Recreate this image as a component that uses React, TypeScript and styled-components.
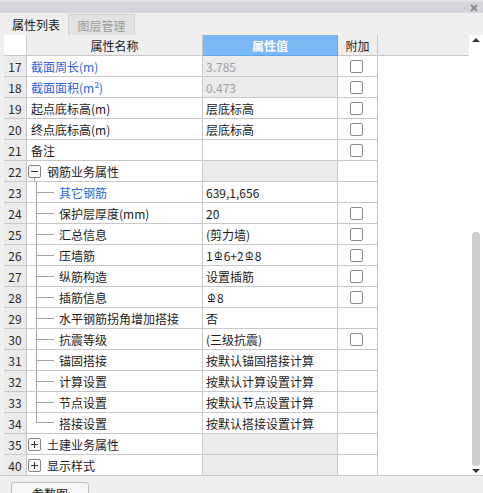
import React from "react";
import styled, { createGlobalStyle, css } from "styled-components";

type Group = "open" | "closed";

interface PropRow {
  no: number;
  name: string;
  value?: string;
  blue?: boolean;
  locked?: boolean;
  check?: boolean;
  group?: Group;
  child?: boolean;
  last?: boolean;
}

// '#' in a value stands for the rebar grade mark
const rows: PropRow[] = [
  { no: 17, name: "截面周长(m)", value: "3.785", blue: true, locked: true, check: true },
  { no: 18, name: "截面面积(m²)", value: "0.473", blue: true, locked: true, check: true },
  { no: 19, name: "起点底标高(m)", value: "层底标高", check: true },
  { no: 20, name: "终点底标高(m)", value: "层底标高", check: true },
  { no: 21, name: "备注", value: "", check: true },
  { no: 22, name: "钢筋业务属性", group: "open", locked: true },
  { no: 23, name: "其它钢筋", value: "639,1,656", child: true, blue: true },
  { no: 24, name: "保护层厚度(mm)", value: "20", child: true, check: true },
  { no: 25, name: "汇总信息", value: "(剪力墙)", child: true, check: true },
  { no: 26, name: "压墙筋", value: "1#6+2#8", child: true, check: true },
  { no: 27, name: "纵筋构造", value: "设置插筋", child: true, check: true },
  { no: 28, name: "插筋信息", value: "#8", child: true, check: true },
  { no: 29, name: "水平钢筋拐角增加搭接", value: "否", child: true },
  { no: 30, name: "抗震等级", value: "(三级抗震)", child: true, check: true },
  { no: 31, name: "锚固搭接", value: "按默认锚固搭接计算", child: true },
  { no: 32, name: "计算设置", value: "按默认计算设置计算", child: true },
  { no: 33, name: "节点设置", value: "按默认节点设置计算", child: true },
  { no: 34, name: "搭接设置", value: "按默认搭接设置计算", child: true, last: true },
  { no: 35, name: "土建业务属性", group: "closed", locked: true },
  { no: 40, name: "显示样式", group: "closed", locked: true },
];

const GRID = "#c8c8c8";

const GlobalStyle = createGlobalStyle`
  html, body {
    margin: 0;
    padding: 0;
    height: 493px;
    overflow: hidden;
    background: #efefef;
  }
  body {
    font-family: "Noto Sans CJK SC", "Noto Sans", sans-serif;
    font-size: 12px;
    color: #1c1c1c;
  }
`;

const Panel = styled.div`
  width: 483px;
  height: 493px;
  display: flex;
  flex-direction: column;
  background: #efefef;
  overflow: hidden;
`;

const TitleBar = styled.div`
  height: 13px;
  box-sizing: border-box;
  border-top: 2px solid #e3e2e7;
  background: #d6d5db;
  display: flex;
  justify-content: flex-end;
  align-items: center;
  padding-right: 5px;
`;

const TabBar = styled.div`
  height: 22px;
  display: flex;
  align-items: stretch;
  padding: 1px 0 0 4px;
  box-sizing: border-box;
`;

const Tab = styled.div<{ $active?: boolean }>`
  display: flex;
  align-items: center;
  justify-content: center;
  box-sizing: border-box;
  ${(p) =>
    p.$active
      ? css`
          width: 64px;
          color: #1a1a1a;
        `
      : css`
          width: 67px;
          color: #9b9b9b;
          background: #e3e3e3;
          border: 1px solid #d3d3d3;
          border-bottom: none;
        `}
`;

const Body = styled.div`
  height: 440px;
  display: flex;
`;

const Gutter = styled.div`
  width: 4px;
  flex: none;
`;

const Table = styled.div`
  width: 465px;
  flex: none;
  display: flex;
  flex-direction: column;
  background: #ffffff;
`;

const Row = styled.div<{ $last?: boolean }>`
  display: grid;
  grid-template-columns: 23px 176px 135px 40px 1fr;
  height: ${(p) => (p.$last ? 20 : 21)}px;
`;

const Cell = styled.div<{ $bottom?: boolean }>`
  box-sizing: border-box;
  border-right: 1px solid ${GRID};
  border-bottom: ${(p) => (p.$bottom === false ? "none" : `1px solid ${GRID}`)};
  display: flex;
  align-items: center;
  overflow: hidden;
  white-space: nowrap;
`;

const HeadCell = styled(Cell)<{ $blue?: boolean }>`
  justify-content: center;
  background: ${(p) => (p.$blue ? "#7bb8f6" : "#efefef")};
  color: ${(p) => (p.$blue ? "#ffffff" : "#1c1c1c")};
  font-weight: ${(p) => (p.$blue ? 700 : 400)};
  border-color: ${(p) => (p.$blue ? "#62a4ec" : GRID)};
`;

const CornerCell = styled.div`
  background: #ffffff;
  border-bottom: 1px solid ${GRID};
  border-right: 1px solid ${GRID};
  box-sizing: border-box;
`;

const HeadFiller = styled.div`
  background: #efefef;
  border-bottom: 1px solid ${GRID};
  box-sizing: border-box;
`;

const NumCell = styled(Cell)`
  background: #ebebeb;
  justify-content: center;
  color: #2a2a2a;
`;

const NameCell = styled(Cell)<{ $blue?: boolean; $tree?: boolean }>`
  padding-left: ${(p) => (p.$tree ? 1 : 4)}px;
  color: ${(p) => (p.$blue ? "#2a66d8" : "#1c1c1c")};
`;

const ValueCell = styled(Cell)<{ $locked?: boolean }>`
  padding-left: 3px;
  background: ${(p) => (p.$locked ? "#ebebeb" : "#ffffff")};
  color: ${(p) => (p.$locked ? "#a0a0a0" : "#1c1c1c")};
`;

const CheckCell = styled(Cell)`
  justify-content: center;
  padding-right: 2px;
`;

const CheckBox = styled.span`
  width: 13px;
  height: 13px;
  box-sizing: border-box;
  border: 1px solid #8c8c8c;
  border-radius: 2px;
  background: #ffffff;
`;

const Expander = styled.span<{ $open?: boolean }>`
  position: relative;
  width: 13px;
  height: 13px;
  box-sizing: border-box;
  border: 1px solid #858585;
  border-radius: 2px;
  background: #fafafa;
  margin-right: 6px;
  display: flex;
  align-items: center;
  justify-content: center;

  ${(p) =>
    p.$open &&
    css`
      &::after {
        content: "";
        position: absolute;
        left: 5px;
        top: 12px;
        height: 5px;
        border-left: 1px solid #a3a3a3;
      }
    `}
`;

const Guide = styled.span<{ $last?: boolean }>`
  flex: none;
  width: 18px;
  margin-left: 8px;
  margin-right: 5px;
  box-sizing: border-box;
  border-left: 1px solid #a3a3a3;
  align-self: ${(p) => (p.$last ? "flex-start" : "stretch")};
  height: ${(p) => (p.$last ? "10px" : "auto")};
  background: linear-gradient(#a3a3a3, #a3a3a3) no-repeat;
  background-size: 100% 1px;
  background-position: ${(p) => (p.$last ? "left bottom" : "left center")};
`;

const RebarMark = styled.span`
  position: relative;
  display: inline-block;
  width: 9px;
  text-align: center;
  font-size: 10px;
  line-height: 10px;
  vertical-align: 3px;
  margin: 0 1px 0 1px;

  &::after {
    content: "";
    position: absolute;
    left: 1px;
    right: 1px;
    bottom: 0;
    border-bottom: 1px solid currentColor;
  }
`;

const BodyFiller = styled.div`
  background: #ffffff;
`;

const ScrollBar = styled.div`
  width: 14px;
  flex: none;
  background: #ffffff;
  display: flex;
  flex-direction: column;
  align-items: center;
  padding: 3px 0 2px;
  box-sizing: border-box;
`;

const Arrow = styled.span<{ $down?: boolean }>`
  width: 0;
  height: 0;
  border-left: 4px solid transparent;
  border-right: 4px solid transparent;
  ${(p) =>
    p.$down
      ? css`
          border-top: 4px solid #333;
        `
      : css`
          border-bottom: 4px solid #333;
        `}
`;

const Thumb = styled.span`
  margin-top: auto;
  margin-bottom: 3px;
  width: 8px;
  height: 234px;
  border-radius: 4px 4px 3px 3px;
  background: #cdcdcd;
`;

const BottomBar = styled.div`
  flex: 1;
  border-top: 1px solid ${GRID};
  padding: 6px 0 0 11px;
  overflow: hidden;
`;

const Button = styled.button`
  width: 78px;
  height: 22px;
  border: 1px solid #bcbcbc;
  border-radius: 3px;
  background: #f6f6f6;
  font-family: inherit;
  font-size: 12px;
  color: #1c1c1c;
  padding: 0;
`;

function renderValue(v: string) {
  const parts = v.split("#");
  return parts.map((part, i) => (
    <React.Fragment key={i}>
      {i > 0 && <RebarMark>Φ</RebarMark>}
      {part}
    </React.Fragment>
  ));
}

const CloseIcon = () => (
  <svg width="8" height="8" viewBox="0 0 8 8">
    <path d="M1 1 L7 7 M7 1 L1 7" stroke="#8a8a8a" strokeWidth="1.8" />
  </svg>
);

const PropertyRow: React.FC<{ row: PropRow; isLast: boolean }> = ({ row, isLast }) => {
  const bottom = !isLast;
  return (
    <Row $last={isLast}>
      <NumCell $bottom={bottom}>{row.no}</NumCell>
      <NameCell $bottom={bottom} $blue={row.blue} $tree={!!row.group || row.child}>
        {row.group && (
          <Expander $open={row.group === "open"}>
            <svg width="7" height="7" viewBox="0 0 7 7">
              <path
                d={row.group === "open" ? "M0 3.5 H7" : "M0 3.5 H7 M3.5 0 V7"}
                stroke="#333"
                strokeWidth="1"
              />
            </svg>
          </Expander>
        )}
        {row.child && <Guide $last={row.last} />}
        {row.name}
      </NameCell>
      <ValueCell $bottom={bottom} $locked={row.locked}>
        {row.value ? renderValue(row.value) : null}
      </ValueCell>
      <CheckCell $bottom={bottom}>{row.check && <CheckBox />}</CheckCell>
      <BodyFiller />
    </Row>
  );
};

export default function App() {
  return (
    <>
      <GlobalStyle />
      <Panel>
        <TitleBar>
          <CloseIcon />
        </TitleBar>
        <TabBar>
          <Tab $active>属性列表</Tab>
          <Tab>图层管理</Tab>
        </TabBar>
        <Body>
          <Gutter />
          <Table>
            <Row>
              <CornerCell />
              <HeadCell>属性名称</HeadCell>
              <HeadCell $blue>属性值</HeadCell>
              <HeadCell>附加</HeadCell>
              <HeadFiller />
            </Row>
            {rows.map((r, i) => (
              <PropertyRow key={r.no} row={r} isLast={i === rows.length - 1} />
            ))}
          </Table>
          <ScrollBar>
            <Arrow />
            <Thumb />
            <Arrow $down />
          </ScrollBar>
        </Body>
        <BottomBar>
          <Button>参数图</Button>
        </BottomBar>
      </Panel>
    </>
  );
}
